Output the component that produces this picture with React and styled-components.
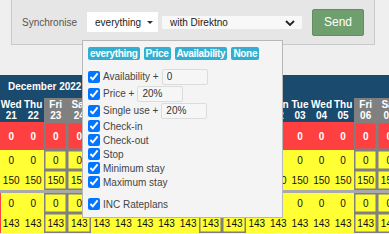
import React from "react";
import styled, { createGlobalStyle } from "styled-components";

const Global = createGlobalStyle`
  html, body { margin: 0; padding: 0; overflow: hidden; background: #efefef; }
  body { font-family: "Liberation Sans", Arial, sans-serif; }
  * { box-sizing: border-box; }
`;

const Page = styled.div`
  position: relative;
  width: 389px;
  height: 234px;
  overflow: hidden;
`;

const Top = styled.div`
  padding: 0 14px 0 11px;
  margin-bottom: 30px;
`;

const Panel = styled.div`
  height: 45px;
  background: #e6e6e6;
  border: 1px solid #c9c9c9;
  border-top: none;
  display: flex;
  align-items: center;
  padding: 0 10px 0 10px;
  font-size: 10px;
`;

const Label = styled.span`
  color: #555;
  margin-right: 10px;
`;

const DropButton = styled.div`
  height: 20px;
  width: 71px;
  background: #fff;
  display: flex;
  align-items: center;
  padding: 0 4px 0 8px;
  color: #222;
  gap: 6px;
`;

const Caret = styled.span`
  width: 0;
  height: 0;
  border-left: 3px solid transparent;
  border-right: 3px solid transparent;
  border-top: 3.5px solid #333;
  margin-top: 1px;
`;

const Select = styled.div`
  margin-left: 4px;
  width: 140px;
  height: 13px;
  margin-top: 1px;
  background: #f8f8f8;
  display: flex;
  align-items: center;
  justify-content: space-between;
  padding: 0 7px 0 8px;
  color: #222;
`;

const SendButton = styled.div`
  margin-left: 10px;
  width: 52px;
  height: 27px;
  background: #6f9f6f;
  border: 1px solid #5f8f5f;
  border-radius: 2px;
  color: #fff;
  font-size: 12px;
  display: flex;
  align-items: center;
  justify-content: center;
`;

const Calendar = styled.div`
  display: grid;
  width: max-content;
  font-size: 10px;
`;

const MonthRow = styled.div`
  grid-column: 1 / -1;
  height: 23px;
  background: #1a4a6e;
  color: #fff;
  font-weight: bold;
  display: flex;
  align-items: center;
  padding-left: 8px;
`;

const DayHead = styled.div`
  height: 24px;
  background: ${(p) => (p.$we ? "#808080" : "#1a4a6e")};
  color: #fff;
  font-weight: bold;
  line-height: 11.5px;
  text-align: center;
  display: flex;
  flex-direction: column;
  justify-content: center;
  white-space: nowrap;
`;

const Cell = styled.div`
  height: ${(p) => p.$h}px;
  background: ${(p) => p.$bg};
  color: ${(p) => (p.$red ? "#fff" : "#111")};
  font-weight: ${(p) => (p.$red ? "bold" : "normal")};
  display: flex;
  align-items: center;
  justify-content: center;
  box-shadow: ${(p) =>
    p.$we
      ? "inset 0 0 0 1.5px #808080"
      : p.$edge
      ? "inset 1px 0 0 #ff4040"
      : "none"};
`;

const Separator = styled.div`
  grid-column: 1 / -1;
  height: 3px;
  background: #a9a9a9;
`;

const Popup = styled.div`
  position: absolute;
  left: 82px;
  top: 40px;
  width: 201px;
  height: 178px;
  background: #f4f4f4;
  border: 1px solid #b8b8b8;
  padding: 6px 5px;
  font-size: 10px;
  color: #444;
`;

const Badges = styled.div`
  display: flex;
  gap: 4px;
  margin-bottom: 8px;
`;

const Badge = styled.span`
  background: #33aed0;
  color: #fff;
  font-weight: bold;
  letter-spacing: -0.3px;
  height: 13px;
  line-height: 13px;
  padding: 0 2px;
  border-radius: 2px;
`;

const Row = styled.label`
  display: flex;
  align-items: center;
  height: ${(p) => (p.$input ? 17 : 14)}px;
  margin-top: ${(p) => (p.$gap ? 8 : 0)}px;
`;

const Check = styled.input`
  width: 12px;
  height: 12px;
  margin: 0 3px 0 0;
`;

const Field = styled.input`
  width: 46px;
  height: 16px;
  margin-left: 3px;
  border: 1px solid #dcdcdc;
  border-radius: 2px;
  background: #f6f6f6;
  font-family: inherit;
  font-size: 10px;
  color: #333;
  padding: 0 4px;
  outline: none;
`;

const days = [
  ["Wed", "21"], ["Thu", "22"], ["Fri", "23", 1], ["Sat", "24", 1],
  ["Sun", "25"], ["Mon", "26"], ["Tue", "27"], ["Wed", "28"], ["Thu", "29"],
  ["Fri", "30", 1], ["Sat", "31", 1], ["Sun", "01"], ["Mon", "02"],
  ["Tue", "03"], ["Wed", "04"], ["Thu", "05"], ["Fri", "06", 1], ["Sat", "07", 1],
];

const widths = days
  .map((d, i) => (i === 0 ? 22.4 : d[2] ? 23.5 : 21.6) + "px")
  .join(" ");

const groupA = [
  { h: 20, v: "0" },
  { h: 20, v: "150" },
];
const groupB = [
  { h: 20, v: "0" },
  { h: 20, v: "143" },
];

const options = [
  { t: "Availability +", v: "0" },
  { t: "Price +", v: "20%" },
  { t: "Single use +", v: "20%" },
  { t: "Check-in" },
  { t: "Check-out" },
  { t: "Stop" },
  { t: "Minimum stay" },
  { t: "Maximum stay" },
  { t: "INC Rateplans", gap: true },
];

export default function App() {
  const renderRow = (r, key, edge) =>
    days.map((d, i) => (
      <Cell
        key={key + i}
        $h={r.h}
        $bg="#ffff33"
        $we={!!d[2]}
        $edge={edge && i === 0}
      >
        {r.v}
      </Cell>
    ));

  return (
    <Page>
      <Global />
      <Top>
        <Panel>
          <Label>Synchronise</Label>
          <DropButton>
            everything <Caret />
          </DropButton>
          <Select>
            with Direktno
            <svg width="10" height="6" viewBox="0 0 10 6">
              <polyline
                points="1,1 5,5 9,1"
                fill="none"
                stroke="#222"
                strokeWidth="1.8"
              />
            </svg>
          </Select>
          <SendButton>Send</SendButton>
        </Panel>
      </Top>

      <Calendar style={{ gridTemplateColumns: widths }}>
        <MonthRow>December 2022</MonthRow>
        {days.map((d, i) => (
          <DayHead key={"h" + i} $we={!!d[2]}>
            <span>{d[0]}</span>
            <span>{d[1]}</span>
          </DayHead>
        ))}
        {days.map((d, i) => (
          <Cell key={"r" + i} $h={28} $bg="#ff4040" $red $we={!!d[2]}>
            0
          </Cell>
        ))}
        {groupA.map((r, k) => renderRow(r, "a" + k, false))}
        <Separator />
        {groupB.map((r, k) => renderRow(r, "b" + k, true))}
      </Calendar>

      <Popup>
        <Badges>
          <Badge>everything</Badge>
          <Badge>Price</Badge>
          <Badge>Availability</Badge>
          <Badge>None</Badge>
        </Badges>
        {options.map((o) => (
          <Row key={o.t} $input={!!o.v} $gap={o.gap}>
            <Check type="checkbox" defaultChecked />
            {o.t}
            {o.v && <Field defaultValue={o.v} />}
          </Row>
        ))}
      </Popup>
    </Page>
  );
}
